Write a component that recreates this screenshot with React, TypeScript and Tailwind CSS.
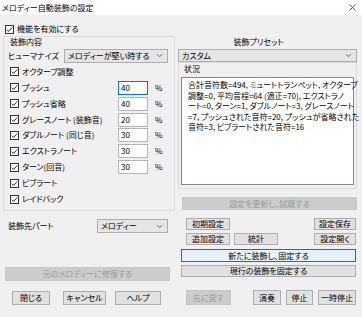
import React from "react";

const FONT = "font-['Noto_Sans_CJK_JP','Noto_Sans',sans-serif] [font-feature-settings:'palt']";

function Check() {
  return (
    <svg width="9" height="9" viewBox="0 0 9 9" className="shrink-0">
      <rect x="0.5" y="0.5" width="8" height="8" fill="#fff" stroke="#333" />
      <path d="M1.8 4.6 L3.6 6.4 L7.2 2.4" fill="none" stroke="#222" strokeWidth="1" />
    </svg>
  );
}

function Chevron() {
  return (
    <svg width="7" height="5" viewBox="0 0 7 5" className="shrink-0">
      <path d="M1 1.2 L3.5 3.7 L6 1.2" fill="none" stroke="#555" strokeWidth="0.9" />
    </svg>
  );
}

function Combo({ label, className }: { label: string; className: string }) {
  return (
    <div
      className={`flex items-center justify-between border border-[#adadad] bg-[#e5e5e5] pl-[3px] pr-[4px] ${className}`}
    >
      <span className="whitespace-nowrap leading-none">{label}</span>
      <Chevron />
    </div>
  );
}

function Btn({
  label,
  className,
  disabled,
  focused,
}: {
  label: string;
  className: string;
  disabled?: boolean;
  focused?: boolean;
}) {
  const tone = disabled
    ? "border-[#c6c6c6] bg-[#cccccc] text-[#9a9a9a]"
    : focused
      ? "border-[#0078d7] bg-[#e5f1fb] text-black"
      : "border-[#adadad] bg-[#e1e1e1] text-black";
  return (
    <div className={`flex items-center justify-center border leading-none whitespace-nowrap ${tone} ${className}`}>
      {label}
    </div>
  );
}

const options: { label: string; value?: string; focus?: boolean }[] = [
  { label: "オクターブ調整" },
  { label: "プッシュ", value: "40", focus: true },
  { label: "プッシュ省略", value: "40" },
  { label: "グレースノート (装飾音)", value: "20" },
  { label: "ダブルノート (同じ音)", value: "30" },
  { label: "エクストラノート", value: "30" },
  { label: "ターン(回音)", value: "30" },
  { label: "ビブラート" },
  { label: "レイドバック" },
];

const status = [
  "合計音符数=494, ミュートトランペット, オクターブ",
  "調整=0, 平均音程=64 (適正=70), エクストラノ",
  "ート=0, ターン=1, ダブルノート=3, グレースノート",
  "=7, プッシュされた音符=20, プッシュが省略された",
  "音符=3, ビブラートされた音符=16",
];

export default function App() {
  return (
    <div className={`w-[362px] h-[317px] overflow-hidden bg-[#f0f0f0] text-[8px] text-black ${FONT}`}>
      {/* Title bar */}
      <div className="flex h-[15px] items-center justify-between bg-white pl-[2px] pr-[6px]">
        <span className="leading-none">メロディー自動装飾の設定</span>
        <svg width="7" height="7" viewBox="0 0 7 7">
          <path d="M0.5 0.5 L6.5 6.5 M6.5 0.5 L0.5 6.5" stroke="#333" strokeWidth="0.8" />
        </svg>
      </div>

      {/* Enable */}
      <div className="mt-[9px] flex h-[10px] items-center gap-[3px] pl-[5px]">
        <Check />
        <span className="leading-none">機能を有効にする</span>
      </div>

      <div className="mt-[2px] flex pl-[3px]">
        {/* Left column */}
        <div className="flex w-[172px] flex-col">
          <div className="flex h-[175px] flex-col border border-[#dadada] pb-[3px]">
            <div className="flex h-[11px] items-center pl-[6px] leading-none">装飾内容</div>
            <div className="flex h-[16px] items-center pl-[4px]">
              <span className="w-[56px] leading-none">ヒューマナイズ</span>
              <Combo label="メロディーが堅い時する" className="h-[14px] w-[104px]" />
            </div>
            {options.map((o) => (
              <div key={o.label} className="flex h-[16px] items-center pl-[6px]">
                <div className="flex w-[108px] items-center gap-[3px]">
                  <Check />
                  <span className="whitespace-nowrap leading-none">{o.label}</span>
                </div>
                {o.value && (
                  <>
                    <div
                      className={`flex h-[14px] w-[30px] items-center border bg-white pl-[2px] leading-none ${
                        o.focus ? "border-[#0078d7]" : "border-[#b4b4b4]"
                      }`}
                    >
                      {o.value}
                    </div>
                    <span className="ml-[7px] leading-none">%</span>
                  </>
                )}
              </div>
            ))}
          </div>

          <div className="mt-[8px] flex h-[14px] items-center pl-[5px]">
            <span className="w-[89px] leading-none">装飾先パート</span>
            <Combo label="メロディー" className="h-[14px] w-[71px]" />
          </div>

          <Btn label="元のメロディーに修復する" disabled className="ml-[2px] mt-[34px] h-[14px] w-[165px]" />

          <div className="mt-[10px] flex h-[14px] pl-[9px]">
            <Btn label="閉じる" className="h-[14px] w-[38px]" />
            <Btn label="キャンセル" className="ml-[13px] h-[14px] w-[43px]" />
            <Btn label="ヘルプ" className="ml-[9px] h-[14px] w-[46px]" />
          </div>
        </div>

        {/* Right column */}
        <div className="ml-[3px] flex w-[179px] flex-col">
          <div className="flex h-[12px] items-center justify-center pr-[18px] leading-none">装飾プリセット</div>
          <Combo label="カスタム" className="mt-[1px] h-[13px] w-[179px]" />

          <div className="flex h-[127px] flex-col border border-[#dadada]">
            <div className="flex h-[12px] items-center pl-[5px] leading-none">状況</div>
            <div className="ml-[2px] mt-[2px] h-[108px] w-[173px] border border-[#828790] bg-white px-[6px] pt-[2px]">
              {status.map((s) => (
                <div key={s} className="h-[10.6px] whitespace-nowrap leading-[10.6px]">
                  {s}
                </div>
              ))}
            </div>
          </div>

          <Btn label="設定を更新し、試聴する" disabled className="ml-[4px] mt-[8px] h-[13px] w-[175px]" />

          <div className="mt-[8px] flex h-[12px] pl-[8px]">
            <Btn label="初期設定" className="h-[12px] w-[44px]" />
            <Btn label="設定保存" className="ml-[84px] h-[12px] w-[42px]" />
          </div>
          <div className="mt-[3px] flex h-[12px] pl-[8px]">
            <Btn label="追加設定" className="h-[12px] w-[44px]" />
            <Btn label="統計" className="ml-[4px] h-[12px] w-[44px]" />
            <Btn label="設定開く" className="ml-[36px] h-[12px] w-[42px]" />
          </div>

          <Btn label="新たに装飾し、固定する" focused className="ml-[3px] mt-[4px] h-[13px] w-[175px]" />
          <Btn label="現行の装飾を固定する" className="ml-[3px] mt-[3px] h-[12px] w-[175px]" />

          <div className="mt-[13px] flex h-[15px] pl-[8px]">
            <Btn label="先に戻す" disabled className="h-[15px] w-[45px]" />
            <Btn label="演奏" className="ml-[22px] h-[15px] w-[28px]" />
            <Btn label="停止" className="ml-[5px] h-[15px] w-[27px]" />
            <Btn label="一時停止" className="ml-[5px] h-[15px] w-[38px]" />
          </div>
        </div>
      </div>
    </div>
  );
}
